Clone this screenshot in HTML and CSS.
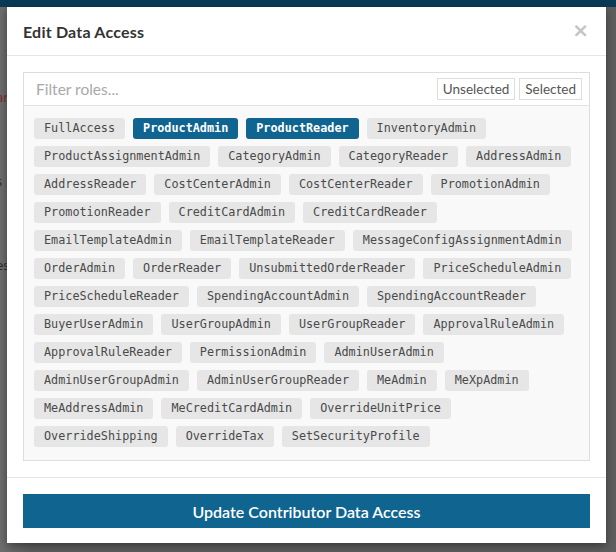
FILE: index.html
```html
<!DOCTYPE html>
<html>
<head>
<meta charset="utf-8">
<link rel="stylesheet" href="styles.css">
</head>
<body>
<div class="page">
  <div class="topbar"></div>
  <div class="bg-content">
    <div class="bg-row"><span class="bg-red">ar</span></div>
    <div class="bg-row"><span>s</span></div>
    <div class="bg-row"><span>es</span></div>
  </div>
</div>
<div class="modal">
  <div class="modal-header">
    <h4 class="modal-title">Edit Data Access</h4>
    <span class="close">&times;</span>
  </div>
  <div class="modal-body">
    <div class="panel">
      <div class="filter-row">
        <input class="filter-input" type="text" placeholder="Filter roles...">
        <div class="filter-btns">
          <button class="fbtn">Unselected</button>
          <button class="fbtn">Selected</button>
        </div>
      </div>
      <div class="tags">
        <span class="tag">FullAccess</span>
        <span class="tag sel">ProductAdmin</span>
        <span class="tag sel">ProductReader</span>
        <span class="tag">InventoryAdmin</span>
        <span class="tag">ProductAssignmentAdmin</span>
        <span class="tag">CategoryAdmin</span>
        <span class="tag">CategoryReader</span>
        <span class="tag">AddressAdmin</span>
        <span class="tag">AddressReader</span>
        <span class="tag">CostCenterAdmin</span>
        <span class="tag">CostCenterReader</span>
        <span class="tag">PromotionAdmin</span>
        <span class="tag">PromotionReader</span>
        <span class="tag">CreditCardAdmin</span>
        <span class="tag">CreditCardReader</span>
        <span class="tag">EmailTemplateAdmin</span>
        <span class="tag">EmailTemplateReader</span>
        <span class="tag">MessageConfigAssignmentAdmin</span>
        <span class="tag">OrderAdmin</span>
        <span class="tag">OrderReader</span>
        <span class="tag">UnsubmittedOrderReader</span>
        <span class="tag">PriceScheduleAdmin</span>
        <span class="tag">PriceScheduleReader</span>
        <span class="tag">SpendingAccountAdmin</span>
        <span class="tag">SpendingAccountReader</span>
        <span class="tag">BuyerUserAdmin</span>
        <span class="tag">UserGroupAdmin</span>
        <span class="tag">UserGroupReader</span>
        <span class="tag">ApprovalRuleAdmin</span>
        <span class="tag">ApprovalRuleReader</span>
        <span class="tag">PermissionAdmin</span>
        <span class="tag">AdminUserAdmin</span>
        <span class="tag">AdminUserGroupAdmin</span>
        <span class="tag">AdminUserGroupReader</span>
        <span class="tag">MeAdmin</span>
        <span class="tag">MeXpAdmin</span>
        <span class="tag">MeAddressAdmin</span>
        <span class="tag">MeCreditCardAdmin</span>
        <span class="tag">OverrideUnitPrice</span>
        <span class="tag">OverrideShipping</span>
        <span class="tag">OverrideTax</span>
        <span class="tag">SetSecurityProfile</span>
      </div>
    </div>
  </div>
  <div class="modal-footer">
    <button class="submit">Update Contributor Data Access</button>
  </div>
</div>
</body>
</html>
```
FILE: styles.css
```css
html, body {
  margin: 0;
  padding: 0;
}
body {
  width: 616px;
  height: 552px;
  overflow: hidden;
  background: #626262;
  font-family: Lato, "Open Sans", sans-serif;
  position: relative;
}
.page {
  height: 552px;
  background: linear-gradient(90deg, #6e6e6e 0, #5e5e5e 30px, #5e5e5e 100%);
}
.topbar {
  height: 7px;
  background: #0a3a55;
}
.bg-content {
  padding-top: 80px;
  font-family: "Open Sans", sans-serif;
  font-size: 13px;
  color: #2a2a2a;
}
.bg-row {
  height: 84px;
  line-height: 20px;
  margin-left: -4px;
}
.bg-red {
  color: #7a2a2a;
}
.modal {
  position: absolute;
  left: 7px;
  top: 7px;
  width: 599px;
  height: 536px;
  background: #fff;
  box-shadow: 0 3px 9px rgba(0,0,0,0.4);
  display: flex;
  flex-direction: column;
}
.modal-header {
  height: 50px;
  box-sizing: border-box;
  border-bottom: 1px solid #e5e5e5;
  display: flex;
  align-items: center;
  justify-content: space-between;
  padding: 0 16px;
}
.modal-title {
  margin: 0;
  font-size: 16px;
  font-weight: 700;
  color: #333;
  letter-spacing: 0.2px;
}
.close {
  font-family: "DejaVu Sans", sans-serif;
  font-size: 20px;
  font-weight: bold;
  color: #c4c4c4;
  line-height: 1;
  margin-top: -2px;
  margin-right: 1px;
}
.modal-body {
  padding: 16px;
}
.panel {
  border: 1px solid #ddd;
  height: 389px;
  box-sizing: border-box;
  background: #f9f9f9;
}
.filter-row {
  height: 33px;
  box-sizing: border-box;
  background: #fff;
  border-bottom: 1px solid #e2e2e2;
  display: flex;
  align-items: center;
  justify-content: space-between;
  padding: 0 7px 0 12px;
}
.filter-input {
  border: none;
  outline: none;
  font-family: Lato, sans-serif;
  font-size: 15.5px;
  color: #555;
  padding: 0;
  width: 300px;
  background: transparent;
}
.filter-input::placeholder {
  color: #a9a9a9;
}
.filter-btns {
  display: flex;
  gap: 4px;
}
.fbtn {
  font-family: Lato, sans-serif;
  font-size: 13.5px;
  color: #555;
  background: #fff;
  border: 1px solid #ddd;
  border-radius: 0;
  height: 22px;
  padding: 0 5px;
  margin: 0;
}
.tags {
  display: flex;
  flex-wrap: wrap;
  gap: 7px 8px;
  padding: 12px 10px;
}
.tag {
  font-family: "DejaVu Sans Mono", monospace;
  font-size: 11.8px;
  height: 21px;
  line-height: 21px;
  padding: 0 10px;
  background: #e6e6e6;
  color: #4a4a4a;
  border-radius: 3px;
  white-space: nowrap;
}
.tag.sel {
  background: #0f6490;
  color: #fff;
  font-weight: bold;
}
.modal-footer {
  border-top: 1px solid #e5e5e5;
  padding: 16px 16px 15px;
}
.submit {
  display: block;
  width: 100%;
  height: 34px;
  border: none;
  background: #0f6490;
  color: #fff;
  font-family: Lato, sans-serif;
  font-size: 16px;
  font-weight: 600;
  margin: 0;
}
```
